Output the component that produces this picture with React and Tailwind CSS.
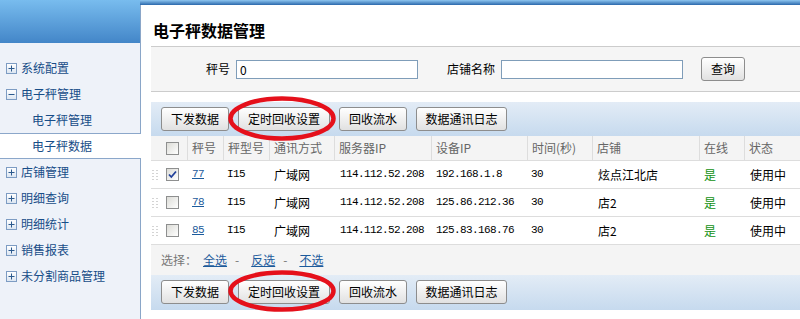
import React from "react";

const cjk = "font-['Noto_Sans_CJK_SC','Noto_Sans',sans-serif]";
const mono = "font-['Liberation_Mono','Noto_Sans_CJK_SC',monospace] text-[11px] tracking-[-0.6px]";

const menu = [
  { label: "系统配置", type: "plus" },
  { label: "电子秤管理", type: "minus" },
  { label: "电子秤管理", type: "sub" },
  { label: "电子秤数据", type: "sub", active: true },
  { label: "店铺管理", type: "plus" },
  { label: "明细查询", type: "plus" },
  { label: "明细统计", type: "plus" },
  { label: "销售报表", type: "plus" },
  { label: "未分割商品管理", type: "plus" },
];

const rows = [
  { no: "77", model: "I15", net: "广域网", server: "114.112.52.208", device: "192.168.1.8", time: "30", shop: "炫点江北店", checked: true },
  { no: "78", model: "I15", net: "广域网", server: "114.112.52.208", device: "125.86.212.36", time: "30", shop: "店2" },
  { no: "85", model: "I15", net: "广域网", server: "114.112.52.208", device: "125.83.168.76", time: "30", shop: "店2" },
];

const cols = "grid grid-cols-[36px_36px_46px_65px_97px_96px_65px_107px_45px_1fr]";

function ToggleBox({ minus }) {
  return (
    <span className="flex h-[11px] w-[11px] shrink-0 items-center justify-center border border-[#7d9cc3] bg-linear-to-b from-white to-[#dce6f2]">
      <svg width="7" height="7" viewBox="0 0 7 7">
        <path d="M0.5 3.5h6" stroke="#2c5a8e" strokeWidth="1" />
        {!minus && <path d="M3.5 0.5v6" stroke="#2c5a8e" strokeWidth="1" />}
      </svg>
    </span>
  );
}

function Checkbox({ checked }) {
  return (
    <span className="flex h-[13px] w-[13px] items-center justify-center border border-[#8e8f8f] bg-linear-to-br from-[#dcdcd7] to-white">
      {checked && (
        <svg width="9" height="9" viewBox="0 0 9 9">
          <path d="M1 4.5l2.3 2.5L8 1.5" fill="none" stroke="#21409a" strokeWidth="1.8" />
        </svg>
      )}
    </span>
  );
}

function Grip() {
  return (
    <svg width="6" height="10" viewBox="0 0 6 10" className="shrink-0">
      {[0, 3, 6, 9].map((y) =>
        [0, 4].map((x) => <rect key={x + "-" + y} x={x} y={y} width="2" height="1" fill="#d4d4d4" />)
      )}
    </svg>
  );
}

function Btn({ children, w }) {
  return (
    <button className={`h-[24px] ${w} shrink-0 rounded-[3px] border border-[#8d8d8d] bg-linear-to-b from-white to-[#e1e1e1] text-[12px] text-black`}>
      {children}
    </button>
  );
}

function Ring({ top, h }) {
  return (
    <svg
      className={`pointer-events-none absolute left-[77px] ${top}`}
      width="108"
      height={h}
      viewBox={`0 0 108 ${h}`}
    >
      <ellipse cx="54" cy={h / 2} rx="51.5" ry={h / 2 - 2.5} fill="none" stroke="#e5101b" strokeWidth="4.5" />
    </svg>
  );
}

function Toolbar({ ringTop, ringH, h }) {
  return (
    <div className={`relative flex ${h} items-start gap-[9px] bg-linear-to-b from-[#e3ecf6] to-[#c6daee] pl-[10px] pt-[5px]`}>
      <Btn w="w-[68px]">下发数据</Btn>
      <Btn w="w-[92px]">定时回收设置</Btn>
      <Btn w="w-[68px]">回收流水</Btn>
      <Btn w="w-[91px]">数据通讯日志</Btn>
      <Ring top={ringTop} h={ringH} />
    </div>
  );
}

export default function App() {
  return (
    <div className={`flex h-[319px] w-[800px] overflow-hidden bg-white text-[12px] ${cjk}`}>
      {/* Sidebar */}
      <div className="flex w-[140px] shrink-0 flex-col bg-[#eef2f9]">
        <div className="h-[43px] bg-linear-to-b from-[#78bcee] to-[#4386c8]" />
        <div className="pt-[12px]">
          {menu.map((m, i) =>
            m.type === "sub" ? (
              <div
                key={i}
                className={`flex h-[26px] items-center pl-[32px] text-[#174d88] ${
                  m.active ? "relative z-10 -mr-px border-y border-[#8ba7ca] bg-white" : ""
                }`}
              >
                {m.label}
              </div>
            ) : (
              <div key={i} className="flex h-[26px] items-center gap-[4px] pl-[6px] text-[#174d88]">
                <ToggleBox minus={m.type === "minus"} />
                <span>{m.label}</span>
              </div>
            )
          )}
        </div>
      </div>

      {/* Content */}
      <div className="flex min-w-0 flex-1 flex-col">
        <div className="h-[5px] shrink-0 bg-linear-to-b from-[#8ec6f0] to-[#2a68ab]" />
        <div className="flex flex-1 flex-col border-l border-[#8aa6c8] pl-[10px]">
          <div className="h-[41px] pl-[2px] pt-[15px] text-[16px] font-bold leading-[20px] text-black">
            电子秤数据管理
          </div>

          {/* Search */}
          <div className="flex h-[46px] items-center border-y border-[#cccccc] bg-[#f5f5f5] pl-[55px] text-black">
            <span>秤号</span>
            <input
              defaultValue="0"
              className={`ml-[6px] h-[19px] w-[182px] border border-[#7f9db9] bg-white px-[3px] text-[12px] outline-none ${cjk}`}
            />
            <span className="ml-[29px]">店铺名称</span>
            <input className="ml-[6px] h-[19px] w-[182px] border border-[#7f9db9] bg-white outline-none" />
            <button className="ml-[18px] h-[24px] w-[44px] rounded-[3px] border border-[#8d8d8d] bg-linear-to-b from-white to-[#e1e1e1] text-[12px] text-black">
              查询
            </button>
          </div>

          <div className="h-[10px]" />

          <Toolbar h="h-[34px]" ringTop="top-[-6px]" ringH={45} />

          {/* Header */}
          <div className={`${cols} h-[25px] border-b border-[#dddddd] bg-[#f4f4f4] text-[#666666]`}>
            <div className="flex items-center pl-[15px]">
              <Checkbox />
            </div>
            {["秤号", "秤型号", "通讯方式", "服务器IP", "设备IP", "时间(秒)", "店铺", "在线", "状态"].map((h, i) => (
              <div key={i} className="flex items-center border-l border-[#dddddd] pl-[4px]">
                {h}
              </div>
            ))}
          </div>

          {/* Rows */}
          {rows.map((r) => (
            <div key={r.no} className={`${cols} h-[28px] border-b border-[#dddddd] text-black`}>
              <div className="flex items-center pl-[1px]">
                <Grip />
                <span className="ml-[8px]">
                  <Checkbox checked={r.checked} />
                </span>
              </div>
              <div className="flex items-center pl-[5px]">
                <a href="#" className={`${mono} text-[#1c5b9c] underline`}>{r.no}</a>
              </div>
              <div className={`flex items-center pl-[4px] ${mono}`}>{r.model}</div>
              <div className="flex items-center pl-[5px]">{r.net}</div>
              <div className={`flex items-center pl-[6px] ${mono}`}>{r.server}</div>
              <div className={`flex items-center pl-[5px] ${mono}`}>{r.device}</div>
              <div className={`flex items-center pl-[4px] ${mono}`}>{r.time}</div>
              <div className="flex items-center pl-[6px]">{r.shop}</div>
              <div className="flex items-center pl-[5px] text-[#129112]">是</div>
              <div className="flex items-center pl-[6px]">使用中</div>
            </div>
          ))}

          {/* Select */}
          <div className="flex h-[30px] items-center bg-[#f4f4f4] pl-[10px] text-[#777777]">
            <span>选择：</span>
            <a href="#" className="ml-[6px] text-[#1c5b9c] underline">全选</a>
            <span className="ml-[8px]">-</span>
            <a href="#" className="ml-[12px] text-[#1c5b9c] underline">反选</a>
            <span className="ml-[8px]">-</span>
            <a href="#" className="ml-[12px] text-[#1c5b9c] underline">不选</a>
          </div>

          <Toolbar h="h-[35px]" ringTop="top-[-5px]" ringH={42} />
        </div>
      </div>
    </div>
  );
}
